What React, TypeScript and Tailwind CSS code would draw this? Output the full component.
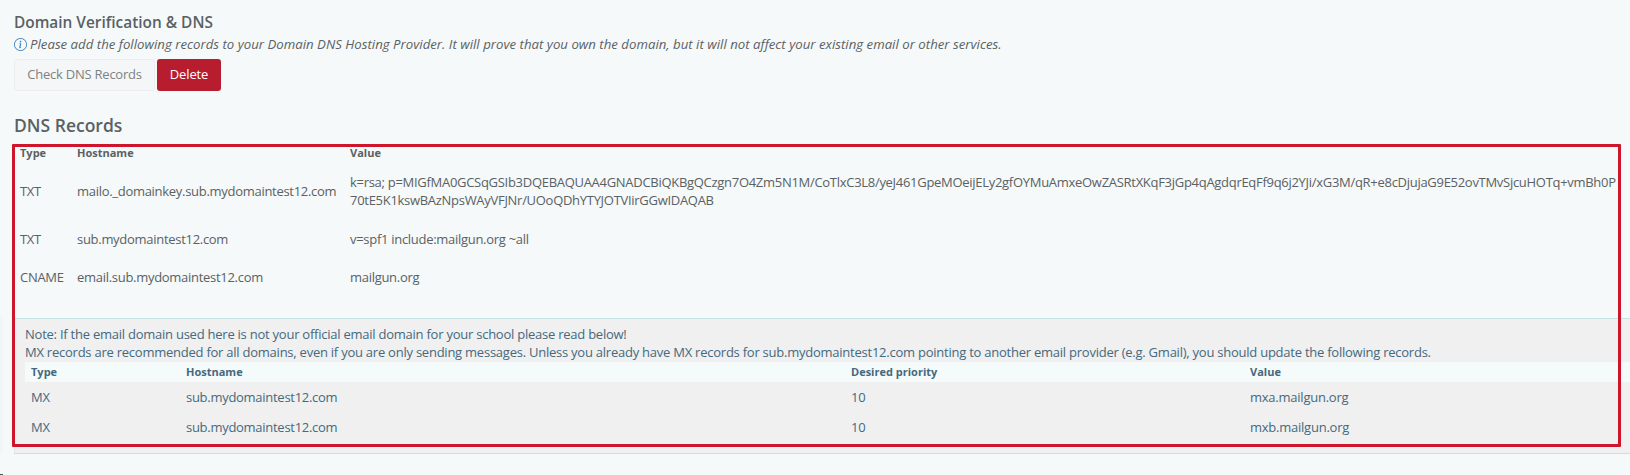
import { BsInfoCircle } from "react-icons/bs";

interface DnsRecord {
  type: string;
  hostname: string;
  value: string;
}

interface MxRecord extends DnsRecord {
  priority: number;
}

const records: DnsRecord[] = [
  {
    type: "TXT",
    hostname: "mailo._domainkey.sub.mydomaintest12.com",
    value:
      "k=rsa; p=MIGfMA0GCSqGSIb3DQEBAQUAA4GNADCBiQKBgQCzgn7O4Zm5N1M/CoTlxC3L8/yeJ461GpeMOeijELy2gfOYMuAmxeOwZASRtXKqF3jGp4qAgdqrEqFf9q6j2YJi/xG3M/qR+e8cDjujaG9E52ovTMvSjcuHOTq+vmBh0P\n70tE5K1kswBAzNpsWAyVFJNr/UOoQDhYTYJOTVIirGGwIDAQAB",
  },
  { type: "TXT", hostname: "sub.mydomaintest12.com", value: "v=spf1 include:mailgun.org ~all" },
  { type: "CNAME", hostname: "email.sub.mydomaintest12.com", value: "mailgun.org" },
];

const mxRecords: MxRecord[] = [
  { type: "MX", hostname: "sub.mydomaintest12.com", priority: 10, value: "mxa.mailgun.org" },
  { type: "MX", hostname: "sub.mydomaintest12.com", priority: 10, value: "mxb.mailgun.org" },
];

function RecordsTable() {
  return (
    <div>
      <div className="grid h-5 grid-cols-[57px_273px_1fr] items-center pl-1.5 text-[11px] font-bold">
        <span>Type</span>
        <span>Hostname</span>
        <span>Value</span>
      </div>
      {records.map((record) => (
        <div
          key={record.hostname}
          className="grid grid-cols-[57px_273px_1fr] items-center py-2.5 pl-1.5 tracking-[-0.29px] nth-2:pb-[11px]"
        >
          <span>{record.type}</span>
          <span>{record.hostname}</span>
          <span className="whitespace-pre">{record.value}</span>
        </div>
      ))}
    </div>
  );
}

function MxNote() {
  return (
    <div className="mt-[22px] h-[136px] border-y border-l border-y-[#c5e3e4] border-l-[#dfeaeb] bg-[#f0f0f0] pt-1.5 pl-2.5 tracking-[-0.24px] text-[#45697d]">
      <p>Note: If the email domain used here is not your official email domain for your school please read below!</p>
      <p className="whitespace-nowrap">
        MX records are recommended for all domains, even if you are only sending messages. Unless you already have MX
        records for sub.mydomaintest12.com pointing to another email provider (e.g. Gmail), you should update the
        following records.
      </p>
      <div className="mt-px grid h-5 grid-cols-[155px_665px_399px_1fr] items-center bg-[#f5fafb] pl-1.5 text-[11px] font-bold tracking-normal">
        <span>Type</span>
        <span>Hostname</span>
        <span>Desired priority</span>
        <span>Value</span>
      </div>
      {mxRecords.map((record) => (
        <div
          key={record.value}
          className="grid h-[30px] grid-cols-[155px_665px_399px_1fr] items-center pl-1.5"
        >
          <span>{record.type}</span>
          <span className="tracking-[-0.28px]">{record.hostname}</span>
          <span>{record.priority}</span>
          <span>{record.value}</span>
        </div>
      ))}
    </div>
  );
}

export default function App() {
  return (
    <div className="relative h-[475px] w-[1630px] overflow-hidden bg-[#f5f9fa] pl-3.5 font-['Open_Sans',sans-serif] text-[13px] leading-[18px] text-[#5a6163]">
      <h2 className="pt-[13px] text-[15.4px] leading-5 font-semibold">Domain Verification &amp; DNS</h2>
      <p className="mt-0.5 flex h-[18px] items-center gap-[3px] text-[13.2px] tracking-[0.015px] italic">
        <BsInfoCircle className="size-[13px] text-[#337ab7]" />
        Please add the following records to your Domain DNS Hosting Provider. It will prove that you own the domain, but
        it will not affect your existing email or other services.
      </p>
      <div className="mt-1.5 flex gap-0.5">
        <button className="h-8 w-[141px] rounded-[3px] border border-[#eceeee] bg-[#f5f6f7] pb-0.5 tracking-[-0.24px] text-[#7d8283]">
          Check DNS Records
        </button>
        <button className="h-8 w-16 rounded-[3px] bg-[#b71c2f] pb-0.5 tracking-[-0.1px] text-white">Delete</button>
      </div>
      <h1 className="mt-[22px] text-[17.5px] leading-6 font-semibold">DNS Records</h1>
      <div className="mt-1.5">
        <RecordsTable />
        <MxNote />
      </div>
      {/* highlight frame around both record tables */}
      <div className="absolute top-[144px] left-3 h-[303px] w-[1609px] rounded-[1px] border-[3px] border-[#cf152c]" />
      <div className="absolute top-[317px] left-0 h-[136px] w-[3px] bg-[#f2f5f6]" />
      <div className="absolute bottom-0 left-0 h-px w-[3px] bg-[#555]" />
    </div>
  );
}
